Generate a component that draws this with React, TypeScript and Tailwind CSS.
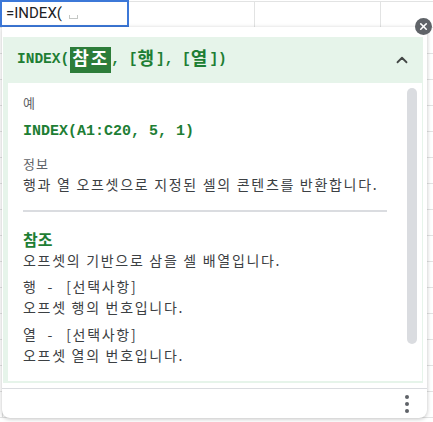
import { ChevronUp, X } from "lucide-react";

const ROWS = Array.from({ length: 16 });
const COLS = Array.from({ length: 4 });

const mono = "font-['Liberation_Mono','Noto_Sans_CJK_KR',monospace]";
const body = "text-[14px] leading-[21px] tracking-[1.7px] text-[#3c4043]";

export default function App() {
  return (
    <div className="relative w-[433px] h-[422px] overflow-hidden bg-white font-['Noto_Sans_CJK_KR','Noto_Sans',sans-serif]">
      {/* sheet grid */}
      <div className="flex flex-col">
        <div className="h-[2px] border-b border-[#e2e3e3]" />
        {ROWS.map((_, r) => (
          <div key={r} className="flex h-[26px] border-b border-[#e2e3e3] pl-[2px]">
            {COLS.map((_, c) => (
              <div key={c} className="w-[126px] shrink-0 border-l border-[#e2e3e3]" />
            ))}
          </div>
        ))}
      </div>

      {/* active cell */}
      <div className="absolute left-0 top-0 w-[129px] h-[27px] border-2 border-[#3c78d8] bg-white flex items-center pl-[4px]">
        <span className="text-[15px] text-[#202124] font-['Roboto',sans-serif]">=INDEX(</span>
        <span className="ml-[7px] mt-[6px] w-[9px] h-[4px] border-b border-l border-r border-[#c4c7c5]" />
      </div>

      {/* formula help popup */}
      <div className="absolute left-[2px] top-[27px] w-[425px] h-[391px] bg-white rounded-b-[8px] shadow-[0_1px_4px_rgba(0,0,0,0.25)] flex flex-col">
        <div className="mt-[10px] ml-[1px] mr-[4px] bg-[#e6f4ea] flex flex-col">
          <div className="h-[46px] flex items-center justify-between pl-[14px] pr-[12px]">
            <div className={`${mono} text-[14.5px] font-bold text-[#1e7e34] flex items-center whitespace-pre`}>
              <span>INDEX(</span>
              <span className="ml-[1px] bg-[#2d7d3a] text-white text-[18px] px-[2px] leading-[26px] tracking-[2px]">참조</span>
              <span>, [</span>
              <span className="text-[18px] tracking-[2px]">행</span>
              <span>], [</span>
              <span className="text-[18px] tracking-[2px]">열</span>
              <span>])</span>
            </div>
            <ChevronUp className="w-[18px] h-[18px] text-[#444746]" strokeWidth={2.4} />
          </div>
          <div className="relative ml-[5px] mr-[1px] mb-[2px] h-[298px] bg-white pl-[15px] pr-[35px] pt-[10px] overflow-hidden">
            <div className="text-[13px] leading-[20px] tracking-[1px] text-[#5f6368]">예</div>
            <div className={`${mono} mt-[8px] text-[15px] leading-[22px] font-bold text-[#1e7e34]`}>INDEX(A1:C20, 5, 1)</div>
            <div className="mt-[11px] text-[13px] leading-[20px] tracking-[1px] text-[#5f6368]">정보</div>
            <div className={body}>행과 열 오프셋으로 지정된 셀의 콘텐츠를 반환합니다.</div>
            <div className="mt-[15px] h-[2px] bg-[#dadce0]" />
            <div className="mt-[17px] text-[16px] leading-[21px] font-bold text-[#1e7e34]">참조</div>
            <div className={body}>오프셋의 기반으로 삼을 셀 배열입니다.</div>
            <div className={`mt-[5px] flex ${body}`}>
              <span>행</span>
              <span className="ml-[10px]">-</span>
              <span className="ml-[12px]">[선택사항]</span>
            </div>
            <div className={body}>오프셋 행의 번호입니다.</div>
            <div className={`mt-[6px] flex ${body}`}>
              <span>열</span>
              <span className="ml-[10px]">-</span>
              <span className="ml-[12px]">[선택사항]</span>
            </div>
            <div className={body}>오프셋 열의 번호입니다.</div>

            <div className="absolute left-[399px] top-[5px] w-[10px] h-[256px] rounded-full bg-[#dadce0]" />
          </div>
        </div>
        <div className="mt-[5px] flex-1 border-t border-[#dadce0] flex items-center justify-end pr-[18px]">
          <div className="flex flex-col gap-[3px]">
            <span className="w-[4px] h-[4px] rounded-full bg-[#5f6368]" />
            <span className="w-[4px] h-[4px] rounded-full bg-[#5f6368]" />
            <span className="w-[4px] h-[4px] rounded-full bg-[#5f6368]" />
          </div>
        </div>
      </div>

      {/* close */}
      <div className="absolute left-[415px] top-[18px] w-[17px] h-[17px] rounded-full bg-[#5f6368] flex items-center justify-center">
        <X className="w-[11px] h-[11px] text-white" strokeWidth={3.5} />
      </div>
    </div>
  );
}
